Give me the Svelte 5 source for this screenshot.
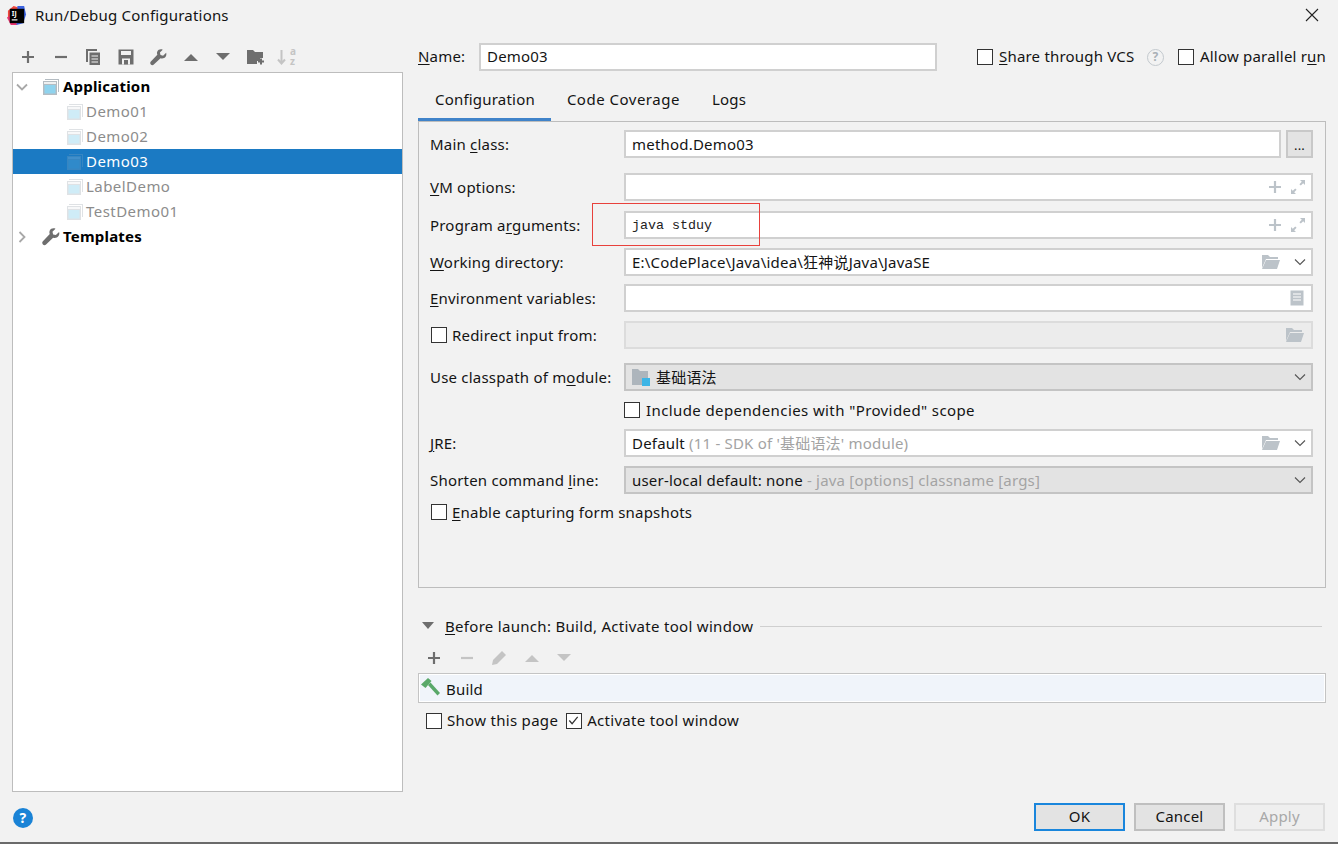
<script>
  const treeItems = [
    { name: 'Demo01', selected: false },
    { name: 'Demo02', selected: false },
    { name: 'Demo03', selected: true },
    { name: 'LabelDemo', selected: false },
    { name: 'TestDemo01', selected: false }
  ];
</script>

{#snippet plus(c = '#6e6e6e')}
  <svg class="ic" viewBox="0 0 16 16"><path d="M8 2v12M2 8h12" stroke={c} stroke-width="2.2" fill="none" /></svg>
{/snippet}
{#snippet minus(c = '#6e6e6e')}
  <svg class="ic" viewBox="0 0 16 16"><path d="M2 8h12" stroke={c} stroke-width="2.2" fill="none" /></svg>
{/snippet}
{#snippet wrench(c = '#6e6e6e')}
  <svg class="ic big" viewBox="0 0 16 16"><path d="M15.2 3.6l-2.9 2.7-2.4-.6-.6-2.4L12 .6c-2-.8-4.300-.2-5.100 1.700-.5 1.100-.4 2.300 0 3.100L.8 11.800c-.8.8-.8 2 0 2.900.8.800 2 .8 2.800 0l6.300-6.100c1 .4 2.200.4 3.300-.1 1.800-.9 2.600-3 2-4.900z" fill={c} /></svg>
{/snippet}
{#snippet up(c = '#6e6e6e')}
  <svg class="ic" viewBox="0 0 16 16"><path d="M1 12L8 5l7 7z" fill={c} /></svg>
{/snippet}
{#snippet down(c = '#6e6e6e')}
  <svg class="ic" viewBox="0 0 16 16"><path d="M1 4l7 7 7-7z" fill={c} /></svg>
{/snippet}
{#snippet appIcon(dim = false)}
  <svg class="app" class:dim viewBox="0 0 18 18">
    <path d="M3 1h14v13h-1V2H3z" fill="#b4bcc2" />
    <rect x="1" y="3" width="14" height="14" fill="#b4bcc2" />
    <rect x="2" y="4" width="12" height="2" fill="#eef0f1" />
    <rect x="2.500" y="7" width="11" height="8.500" fill="#8fd3ee" />
  </svg>
{/snippet}
{#snippet adders()}
  <span class="adornment shifted">
    <svg class="ic" viewBox="0 0 16 16"><path d="M8 2v12M2 8h12" stroke="#bcc3c9" stroke-width="2.200" fill="none" /></svg>
    <svg class="ic expand" viewBox="0 0 16 16"><path d="M10 1h5v5l-1.800-1.800-2.400 2.400-1.400-1.400 2.400-2.400zM1 10l1.800 1.800 2.400-2.400 1.400 1.400-2.400 2.400L6 15H1z" fill="#bcc3c9" /></svg>
  </span>
{/snippet}
{#snippet folderOpen()}
  <svg class="folder" viewBox="0 0 20 16"><path d="M1 1h6l2 2h8v2H5L1 14z" fill="#bcc3c9" /><path d="M5 6h14l-3 9H1z" fill="#bcc3c9" /></svg>
{/snippet}
{#snippet chev()}
  <svg class="chev" viewBox="0 0 12 8"><path d="M1 1.500l5 5 5-5" fill="none" stroke="#555" stroke-width="1.100" /></svg>
{/snippet}

<div class="dialog">
  <header class="titlebar">
    <svg class="logo" viewBox="0 0 22 22">
      <path d="M2 6L8 1l6 2-4 8-8 4z" fill="#f0463c" />
      <path d="M1 13l6-3 5 11H5z" fill="#e8336e" />
      <path d="M12 1h7l2 9-3 9-7 2z" fill="#3b62e0" />
      <rect x="4" y="4" width="15" height="15" fill="#000" />
      <text x="6" y="12" class="logo-t">IJ</text>
      <rect x="6" y="15" width="6" height="1.200" fill="#fff" />
    </svg>
    <span class="title">Run/Debug Configurations</span>
    <svg class="close" viewBox="0 0 14 14"><path d="M1 1l12 12M13 1L1 13" stroke="#222" stroke-width="1.100" fill="none" /></svg>
  </header>

  <div class="main">
    <aside class="left">
      <div class="toolbar">
        <span class="tb">{@render plus()}</span>
        <span class="tb">{@render minus()}</span>
        <span class="tb">
          <svg class="ic" viewBox="0 0 16 16"><path d="M1 0h11v2H3v11H1z" fill="#6e6e6e" /><path d="M4.500 3.500H15V16H4.500z" fill="#6e6e6e" /><path d="M6.500 7h6.500M6.500 10h6.500M6.500 13h6.500" stroke="#f2f2f2" stroke-width="1.200" /></svg>
        </span>
        <span class="tb">
          <svg class="ic" viewBox="0 0 16 16"><path d="M0.500 0.500h15v15h-15z" fill="#6e6e6e" /><rect x="3" y="2" width="10" height="4" fill="#f2f2f2" /><rect x="4" y="9.500" width="8" height="6" fill="#f2f2f2" /><rect x="6" y="11" width="4" height="4.500" fill="#6e6e6e" /></svg>
        </span>
        <span class="tb">{@render wrench()}</span>
        <span class="tb">{@render up()}</span>
        <span class="tb">{@render down()}</span>
        <span class="tb">
          <svg class="ic wide" viewBox="0 0 18 16"><path d="M0 1h6l2 2h8v6h-3v3h-3v3H0z" fill="#6e6e6e" /><path d="M14 9.500v6M11 12.500h6" stroke="#6e6e6e" stroke-width="2" /></svg>
        </span>
        <span class="tb sort">
          <svg class="ic" viewBox="0 0 16 16"><path d="M4.500 1v13M1 10.500l3.500 4 3.500-4" fill="none" stroke="#c4c4c4" stroke-width="2" /></svg>
          <span class="az"><span>a</span><span>z</span></span>
        </span>
      </div>

      <div class="tree">
        <div class="node">
          <svg class="arrow" viewBox="0 0 12 12"><path d="M1 3.500l5 5 5-5" fill="none" stroke="#a8a8a8" stroke-width="1.800" /></svg>
          {@render appIcon()}
          <b>Application</b>
        </div>
        {#each treeItems as item}
          <div class="node leaf" class:selected={item.selected}>
            {@render appIcon(true)}
            <span>{item.name}</span>
          </div>
        {/each}
        <div class="node">
          <svg class="arrow" viewBox="0 0 12 12"><path d="M3.500 1l5 5-5 5" fill="none" stroke="#a8a8a8" stroke-width="1.800" /></svg>
          <svg class="app" viewBox="0 0 16 16"><path d="M15.200 3.600l-2.900 2.700-2.400-.6-.6-2.400L12 .6c-2-.8-4.300-.2-5.100 1.700-.5 1.100-.4 2.300 0 3.100L.8 11.800c-.8.8-.8 2 0 2.900.8.800 2 .8 2.800 0l6.300-6.100c1 .4 2.200.4 3.300-.1 1.800-.9 2.600-3 2-4.900z" fill="#6e6e6e" /></svg>
          <b>Templates</b>
        </div>
      </div>
    </aside>

    <section class="right">
      <div class="namerow">
        <label class="namelabel" for="cfgname"><u>N</u>ame:</label>
        <div id="cfgname" class="field name">Demo03</div>
        <span class="check share"><i class="box"></i><span><u>S</u>hare through VCS</span></span>
        <span class="help">?</span>
        <span class="check parallel"><i class="box"></i><span>Allow parallel r<u>u</u>n</span></span>
      </div>

      <nav class="tabs">
        <span class="tab active">Configuration</span>
        <span class="tab cov">Code Coverage</span>
        <span class="tab">Logs</span>
      </nav>

      <div class="panel">
        <div class="row">
          <span class="lab">Main <u>c</u>lass:</span>
          <div class="field grow">method.Demo03</div>
          <span class="dots">...</span>
        </div>
        <div class="row g15">
          <span class="lab"><u>V</u>M options:</span>
          <div class="field grow">{@render adders()}</div>
        </div>
        <div class="row g10">
          <span class="lab">Program a<u>r</u>guments:</span>
          <div class="field grow mono"><span class="monotext">java stduy</span>{@render adders()}</div>
        </div>
        <div class="row g9">
          <span class="lab"><u>W</u>orking directory:</span>
          <div class="field grow">
            <span class="val">E:\CodePlace\Java\idea\狂神说Java\JavaSE</span>
            <span class="adornment">{@render folderOpen()}{@render chev()}</span>
          </div>
        </div>
        <div class="row g8">
          <span class="lab"><u>E</u>nvironment variables:</span>
          <div class="field grow">
            <span class="adornment">
              <svg class="doc" viewBox="0 0 14 16"><rect x="0.500" y="0.500" width="13" height="15" fill="#bcc3c9" /><path d="M3 4h8M3 7h8M3 10h8" stroke="#fff" stroke-width="1.200" /></svg>
            </span>
          </div>
        </div>
        <div class="row g9">
          <span class="lab check inset"><i class="box"></i><span>Redirect input from:</span></span>
          <div class="field grow off">
            <span class="adornment">{@render folderOpen()}</span>
          </div>
        </div>
        <div class="row g14">
          <span class="lab">Use classpath of m<u>o</u>dule:</span>
          <div class="field grow combo">
            <svg class="modicon" viewBox="0 0 18 18"><path d="M0 1h6l2 2h8v9h-5v5H0z" fill="#adb5bc" /><rect x="10" y="10" width="8" height="8" fill="#3db5e6" /></svg>
            <span class="val">基础语法</span>
            <span class="adornment">{@render chev()}</span>
          </div>
        </div>
        <div class="row short g9">
          <span class="lab"></span>
          <span class="check wider"><i class="box"></i><span>Include dependencies with "Provided" scope</span></span>
        </div>
        <div class="row g9">
          <span class="lab"><u>J</u>RE:</span>
          <div class="field grow">
            <span class="val">Default <em>(11 - SDK of '基础语法' module)</em></span>
            <span class="adornment">{@render folderOpen()}{@render chev()}</span>
          </div>
        </div>
        <div class="row g9">
          <span class="lab">Shorten command <u>l</u>ine:</span>
          <div class="field grow combo">
            <span class="val">user-local default: none <em>- java [options] classname [args]</em></span>
            <span class="adornment">{@render chev()}</span>
          </div>
        </div>
        <div class="row short g8">
          <span class="check inset"><i class="box"></i><span><u>E</u>nable capturing form snapshots</span></span>
        </div>
      </div>

      <div class="before">
        <svg class="tri" viewBox="0 0 12 8"><path d="M0 0h12L6 7z" fill="#6e6e6e" /></svg>
        <span><u>B</u>efore launch: Build, Activate tool window</span>
        <i class="rule"></i>
      </div>

      <div class="toolbar small">
        <span class="tb">{@render plus()}</span>
        <span class="tb">{@render minus('#c4c4c4')}</span>
        <span class="tb">
          <svg class="ic" viewBox="0 0 16 16"><path d="M1 15l1-5L11 1l4 4-9 9z" fill="#c4c4c4" /></svg>
        </span>
        <span class="tb">{@render up('#c4c4c4')}</span>
        <span class="tb">{@render down('#c4c4c4')}</span>
      </div>

      <div class="buildlist">
        <svg class="hammer" viewBox="0 0 19 18"><path d="M7 7l2.500-2.500L19 15l-2.500 2.500z" fill="#59a869" /><path d="M0 6.500L7 0l3.500 3-6 7z" fill="#59a869" /></svg>
        <span>Build</span>
      </div>

      <div class="showrow">
        <span class="check"><i class="box"></i><span>Show this page</span></span>
        <span class="check"><i class="box on"><svg viewBox="0 0 14 14"><path d="M2.500 7l3 3.500 6-7.500" fill="none" stroke="#333" stroke-width="1.300" /></svg></i><span>Activate tool window</span></span>
      </div>
    </section>
  </div>

  <footer class="footer">
    <span class="helpbtn">?</span>
    <div class="buttons">
      <span class="btn ok">OK</span>
      <span class="btn">Cancel</span>
      <span class="btn disabled">Apply</span>
    </div>
  </footer>

  <i class="redbox"></i>
</div>

<style>
  :global(body) { margin: 0; background: #f2f2f2; }
  .dialog {
    position: relative;
    width: 1338px;
    height: 844px;
    box-sizing: border-box;
    background: #f2f2f2;
    color: #141414;
    font: 15px/20px "Noto Sans", "Noto Sans CJK SC", sans-serif;
    letter-spacing: 0.2px;
    border-bottom: 2px solid #6a6a6a;
    display: flex;
    flex-direction: column;
    overflow: hidden;
  }
  u { text-underline-offset: 2px; }

  .titlebar { height: 30px; display: flex; align-items: center; padding: 0 19px 0 6px; flex: none; }
  .logo { width: 21px; height: 21px; margin-right: 8px; }
  .logo-t { font: 700 7px "Noto Sans", sans-serif; fill: #fff; }
  .title { flex: 1; margin-bottom: 1px; }
  .close { width: 14px; height: 14px; }

  .main { flex: 1; display: flex; min-height: 0; }
  .left { width: 403px; flex: none; padding-left: 12px; box-sizing: border-box; display: flex; flex-direction: column; }

  .toolbar { height: 41px; flex: none; display: flex; align-items: center; }
  .tb { width: 32.500px; display: flex; justify-content: center; align-items: center; }
  .left .toolbar { padding-top: 12px; height: 30px; }
  .ic { width: 16px; height: 16px; display: block; }
  .ic.wide { width: 18px; }
  .ic.big { width: 17px; height: 17px; }
  .sort { position: relative; }
  .sort .ic { margin-right: 6px; }
  .az { position: absolute; left: 18px; top: -3px; display: flex; flex-direction: column; font: 700 10px/10px "Noto Sans", sans-serif; color: #c4c4c4; }

  .tree { height: 720px; border: 1px solid #bdbdbd; background: #fff; box-sizing: border-box; padding-top: 1px; }
  .node { height: 25px; display: flex; align-items: center; padding-left: 3px; }
  .node b { font-weight: 700; color: #000; margin-bottom: 2px; }
  .node span { margin-bottom: 2px; }
  .arrow { width: 12px; height: 12px; margin-right: 14px; }
  .app { width: 18px; height: 18px; margin-right: 3px; flex: none; }
  .app.dim { opacity: 0.42; }
  .leaf { padding-left: 53px; color: #8c8c8c; letter-spacing: 0.45px; }
  .leaf .app { margin-right: 2px; }
  .selected { background: #1b7ac3; color: #fff; }
  .selected .app { opacity: 0.18; }

  .right { flex: 1; padding: 0 12px 0 15px; display: flex; flex-direction: column; min-width: 0; }
  .namerow { height: 28px; margin-top: 13px; display: flex; align-items: center; flex: none; }
  .namelabel { width: 61px; flex: none; margin-bottom: 2px; }
  .field {
    box-sizing: border-box;
    height: 28px;
    border: 2px solid #d0d0d0;
    background: #fff;
    padding: 0 6px;
    display: flex;
    align-items: center;
    min-width: 0;
  }
  .name { width: 458px; flex: none; margin-right: 40px; padding-bottom: 2px; }
  .share { width: 178px; flex: none; }
  .share span, .parallel span { margin-bottom: 2px; }
  .parallel { flex: none; margin-left: 14px; }
  .help {
    width: 17px; height: 17px; flex: none; box-sizing: border-box;
    border: 1.500px solid #c3c9ce; border-radius: 50%;
    color: #a9b0b6; font-size: 12px; line-height: 14px; text-align: center; font-weight: 700;
    margin-left: -8px;
  }
  .check { display: inline-flex; align-items: center; }
  .box {
    box-sizing: border-box; width: 16px; height: 16px; flex: none;
    border: 1.500px solid #333; background: #fff; margin-right: 6px; display: block;
  }
  .inset .box { margin-left: 1px; margin-right: 5px; }
  .box svg { display: block; width: 13px; height: 13px; }
  .wider { letter-spacing: 0.4px; }

  .tabs { height: 39px; display: flex; margin-top: 11px; flex: none; box-sizing: border-box; padding-top: 7px; }
  .tab { padding: 0 16px; height: 32px; box-sizing: border-box; }
  .tab.active { border-bottom: 3px solid #4083c9; padding-left: 17px; }
  .tab.cov { letter-spacing: 0.5px; }

  .panel {
    height: 467px; flex: none; box-sizing: border-box;
    border: 1px solid #bdbdbd;
    padding: 8px 12px 0 11px;
  }
  .row { display: flex; height: 28px; align-items: center; }
  .short { height: 20px; }
  .g8 { margin-top: 8px; } .g9 { margin-top: 9px; } .g10 { margin-top: 10px; }
  .g14 { margin-top: 14px; } .g15 { margin-top: 15px; }
  .lab { width: 194px; flex: none; white-space: nowrap; }
  .grow { flex: 1; }
  .val { flex: 1; white-space: nowrap; }
  .val em { font-style: normal; color: #a3a3a3; }
  .dots {
    width: 27px; height: 28px; margin-left: 5px; flex: none; box-sizing: border-box;
    border: 2px solid #c8c8c8; background: #e3e3e3; text-align: center; line-height: 26px;
    font-size: 13px;
  }
  .adornment { margin-left: auto; display: flex; align-items: center; gap: 7px; }
  .shifted { margin-right: -1px; }
  .folder { width: 20px; height: 16px; display: block; }
  .chev { width: 12px; height: 8px; display: block; margin-left: 6px; margin-right: -1px; }
  .doc { width: 14px; height: 16px; display: block; margin-right: 1px; }
  .monotext { font: 13.330px "Liberation Mono", monospace; color: #222; letter-spacing: 0; }
  .off { background: #ececec; border-color: #dcdcdc; }
  .combo { background: #e3e3e3; border-color: #c4c4c4; }
  .modicon { width: 18px; height: 18px; margin-right: 6px; flex: none; }

  .before { height: 20px; margin-top: 28px; display: flex; align-items: center; flex: none; letter-spacing: 0.3px; }
  .tri { width: 12px; height: 8px; margin: 0 11px 0 4px; }
  .rule { flex: 1; height: 1px; background: #cfcfcf; margin-left: 7px; display: block; margin-right: 4px; }
  .toolbar.small { height: 30px; margin-top: 7px; }
  .buildlist {
    height: 30px; flex: none; box-sizing: border-box;
    border: 1px solid #c4c4c4; background: #f0f4fa; box-shadow: inset 0 0 0 1px #fff;
    display: flex; align-items: center; padding-left: 2px;
  }
  .buildlist span { margin-top: 1px; }
  .hammer { width: 19px; height: 18px; margin-right: 6px; margin-top: -3px; flex: none; }
  .showrow { height: 20px; margin-top: 8px; display: flex; align-items: center; gap: 8px; padding-left: 8px; letter-spacing: 0.3px; }
  .showrow .check > span { margin-bottom: 2px; }
  .showrow .box { margin-right: 5px; }

  .footer { height: 50px; flex: none; display: flex; align-items: flex-start; justify-content: space-between; padding: 0 13px 0 13px; box-sizing: border-box; }
  .helpbtn {
    width: 20px; height: 20px; margin-top: 16px; border-radius: 50%; background: #1a83d6; color: #fff;
    text-align: center; font-weight: 700; font-size: 14px; line-height: 20px;
  }
  .buttons { display: flex; gap: 9px; margin-top: 11px; }
  .btn {
    box-sizing: border-box; width: 91px; height: 28px; background: #e3e3e3; border: 2px solid #bfbfbf;
    text-align: center; line-height: 22px;
  }
  .btn.ok { border-color: #1a86dc; }
  .btn.disabled { background: #efefef; border-color: #dedede; color: #a8a8a8; }

  .redbox { position: absolute; left: 592px; top: 203px; width: 166px; height: 41px; border: 1px solid #e8413c; pointer-events: none; }
</style>
